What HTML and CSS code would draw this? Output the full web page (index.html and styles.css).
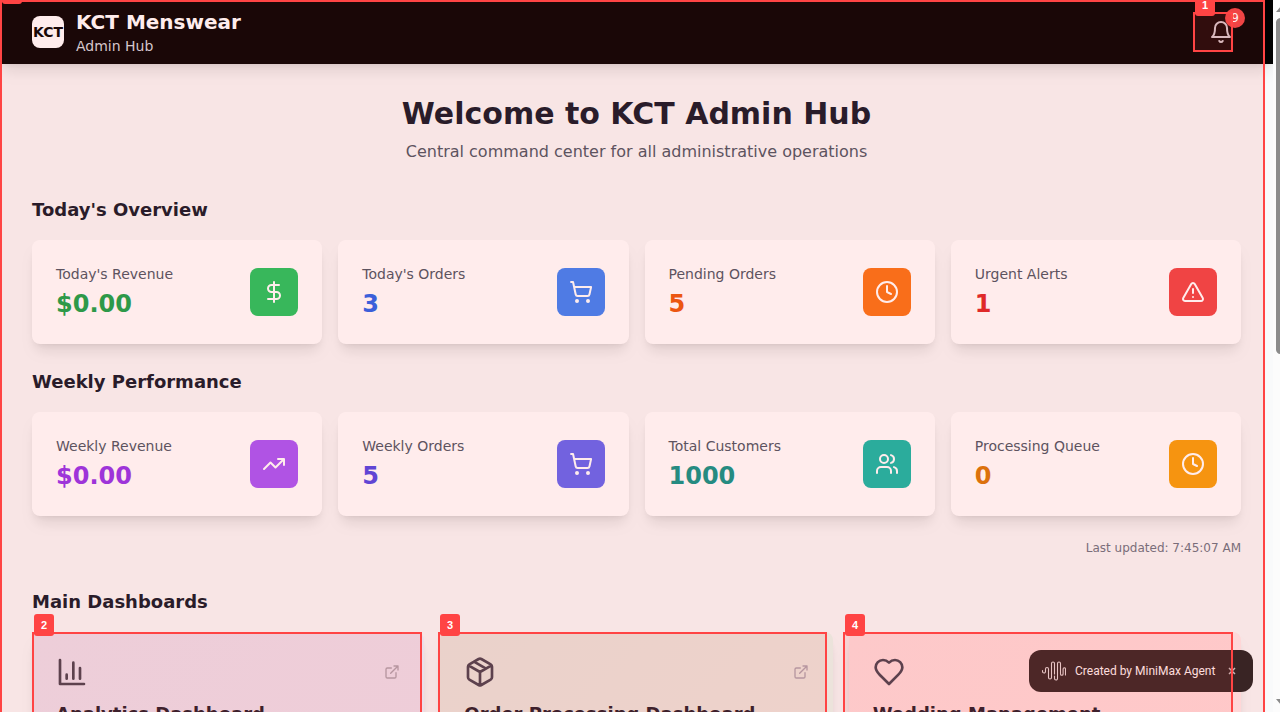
FILE: index.html
```html
<!DOCTYPE html>
<html lang="en">
<head>
<meta charset="utf-8">
<title>KCT Admin Hub</title>
<link rel="stylesheet" href="styles.css">
</head>
<body>
<svg class="defs" aria-hidden="true">
  <symbol id="cart" viewBox="0 0 24 24"><circle cx="8" cy="21" r="1"/><circle cx="19" cy="21" r="1"/><path d="M2.05 2.05h2l2.66 12.42a2 2 0 0 0 2 1.58h9.78a2 2 0 0 0 1.95-1.57l1.65-7.43H5.12"/></symbol>
  <symbol id="clock" viewBox="0 0 24 24"><circle cx="12" cy="12" r="10"/><path d="M12 6v6l4 2"/></symbol>
  <symbol id="external" viewBox="0 0 24 24"><path d="M15 3h6v6M10 14 21 3M18 13v6a2 2 0 0 1-2 2H5a2 2 0 0 1-2-2V8a2 2 0 0 1 2-2h6"/></symbol>
</svg>
<div class="window">
  <div class="page">
    <header class="header">
      <div class="logo">KCT</div>
      <div class="brand">
        <div class="brand-name">KCT Menswear</div>
        <div class="brand-sub">Admin Hub</div>
      </div>
      <div class="bell">
        <svg class="icon" viewBox="0 0 24 24"><path d="M6 8a6 6 0 0 1 12 0c0 7 3 9 3 9H3s3-2 3-9"/><path d="M10.3 21a1.94 1.94 0 0 0 3.4 0"/></svg>
        <span class="bell-count">9</span>
      </div>
    </header>
    <main class="main">
      <div class="intro">
        <h1 class="title">Welcome to KCT Admin Hub</h1>
        <p class="subtitle">Central command center for all administrative operations</p>
      </div>
      <section class="section">
        <h2 class="heading">Today's Overview</h2>
        <div class="stats">
          <div class="stat"><div><p class="label">Today's Revenue</p><p class="value green">$0.00</p></div><div class="tile bg-green"><svg class="icon" viewBox="0 0 24 24"><path d="M12 2v20M17 5H9.5a3.5 3.5 0 0 0 0 7h5a3.5 3.5 0 0 1 0 7H6"/></svg></div></div>
          <div class="stat"><div><p class="label">Today's Orders</p><p class="value blue">3</p></div><div class="tile bg-blue"><svg class="icon"><use href="#cart"/></svg></div></div>
          <div class="stat"><div><p class="label">Pending Orders</p><p class="value orange">5</p></div><div class="tile bg-orange"><svg class="icon"><use href="#clock"/></svg></div></div>
          <div class="stat"><div><p class="label">Urgent Alerts</p><p class="value red">1</p></div><div class="tile bg-red"><svg class="icon" viewBox="0 0 24 24"><path d="m21.73 18-8-14a2 2 0 0 0-3.48 0l-8 14A2 2 0 0 0 4 21h16a2 2 0 0 0 1.73-3M12 9v4M12 17h.01"/></svg></div></div>
        </div>
      </section>
      <section class="section">
        <h2 class="heading">Weekly Performance</h2>
        <div class="stats">
          <div class="stat"><div><p class="label">Weekly Revenue</p><p class="value purple">$0.00</p></div><div class="tile bg-purple"><svg class="icon" viewBox="0 0 24 24"><path d="m22 7-8.500 8.500-5-5L2 17M16 7h6v6"/></svg></div></div>
          <div class="stat"><div><p class="label">Weekly Orders</p><p class="value indigo">5</p></div><div class="tile bg-indigo"><svg class="icon"><use href="#cart"/></svg></div></div>
          <div class="stat"><div><p class="label">Total Customers</p><p class="value teal">1000</p></div><div class="tile bg-teal"><svg class="icon" viewBox="0 0 24 24"><path d="M16 21v-2a4 4 0 0 0-4-4H6a4 4 0 0 0-4 4v2"/><circle cx="9" cy="7" r="4"/><path d="M22 21v-2a4 4 0 0 0-3-3.870M16 3.130a4 4 0 0 1 0 7.750"/></svg></div></div>
          <div class="stat"><div><p class="label">Processing Queue</p><p class="value amber">0</p></div><div class="tile bg-amber"><svg class="icon"><use href="#clock"/></svg></div></div>
        </div>
      </section>
      <p class="updated">Last updated: 7:45:07 AM</p>
      <section>
        <h2 class="heading">Main Dashboards</h2>
        <div class="boards">
          <div class="board board-analytics">
            <div class="board-top"><svg class="icon icon-lg" viewBox="0 0 24 24"><path d="M3 3v18h18M18 17V9M13 17V5M8 17v-3"/></svg><svg class="icon icon-sm"><use href="#external"/></svg></div>
            <h3 class="board-title">Analytics Dashboard</h3>
          </div>
          <div class="board board-orders">
            <div class="board-top"><svg class="icon icon-lg" viewBox="0 0 24 24"><path d="m7.500 4.270 9 5.150M21 8a2 2 0 0 0-1-1.730l-7-4a2 2 0 0 0-2 0l-7 4A2 2 0 0 0 3 8v8a2 2 0 0 0 1 1.730l7 4a2 2 0 0 0 2 0l7-4A2 2 0 0 0 21 16ZM3.300 7l8.700 5 8.700-5M12 22V12"/></svg><svg class="icon icon-sm"><use href="#external"/></svg></div>
            <h3 class="board-title">Order Processing Dashboard</h3>
          </div>
          <div class="board board-wedding">
            <div class="board-top"><svg class="icon icon-lg" viewBox="0 0 24 24"><path d="M19 14c1.490-1.460 3-3.210 3-5.500A5.500 5.500 0 0 0 16.500 3c-1.760 0-3 .5-4.500 2-1.500-1.500-2.740-2-4.500-2A5.500 5.500 0 0 0 2 8.500c0 2.300 1.500 4.050 3 5.500l7 7Z"/></svg><svg class="icon icon-sm"><use href="#external"/></svg></div>
            <h3 class="board-title">Wedding Management</h3>
          </div>
        </div>
      </section>
    </main>
  </div>
  <div class="scrollbar">
    <svg class="arrow" viewBox="0 0 10 6"><path d="M0 6 5 0l5 6z"/></svg>
    <div class="thumb"></div>
    <svg class="arrow arrow-down" viewBox="0 0 10 6"><path d="M0 0h10L5 6z"/></svg>
  </div>

  <div class="toast">
    <svg class="wave" viewBox="0 0 24 20"><path d="M.5 9.500v1a1.500 1.500 0 0 0 3 0V8a1.500 1.500 0 0 1 3 0v8.500a1.500 1.500 0 0 0 3 0V2.500a1.500 1.500 0 0 1 3 0V13M12.500 15v2.500a1.500 1.500 0 0 0 3 0V2.500a1.500 1.500 0 0 1 3 0V13a1.300 1.300 0 0 0 2.600 0V8a1.200 1.200 0 0 1 2.400 0v6"/></svg>
    <span>Created by MiniMax Agent</span>
    <svg class="close" viewBox="0 0 8 8"><path d="m1 1 6 6M7 1 1 7"/></svg>
  </div>

  <div class="mark mark-0"><span class="tag">0</span></div>
  <div class="mark mark-1"><span class="tag">1</span></div>
  <div class="mark mark-2"><span class="tag">2</span></div>
  <div class="mark mark-3"><span class="tag">3</span></div>
  <div class="mark mark-4"><span class="tag">4</span></div>
</div>
</body>
</html>
```
FILE: styles.css
```css
* { box-sizing: border-box; }
body, h1, h2, h3, p { margin: 0; }
body { background: #fff; overflow: hidden; font-family: "DejaVu Sans", sans-serif; color: #111827; }
.defs { position: absolute; width: 0; height: 0; }

.window { position: relative; display: flex; width: 1280px; height: 712px; overflow: hidden; }
.page { flex: 0 0 1273px; background: linear-gradient(90deg, #f8f8f8 1264px, #f9fafb 1266px); }

.icon { display: block; width: 24px; height: 24px; fill: none; stroke: currentColor; stroke-width: 2; stroke-linecap: round; stroke-linejoin: round; }
.icon-lg { width: 32px; height: 32px; color: #374151; }
.icon-sm { width: 16px; height: 16px; color: #a6aab6; }

.header { display: flex; align-items: center; gap: 12px; height: 64px; padding: 0 32px; background: #000; color: #fff; box-shadow: 0 10px 15px -3px rgba(0,0,0,.1), 0 4px 6px -4px rgba(0,0,0,.1); }
.logo { display: flex; align-items: center; justify-content: center; width: 32px; height: 32px; border-radius: 8px; background: #fff; color: #000; font-size: 14px; font-weight: 700; }
.brand-name { font-size: 20px; line-height: 28px; font-weight: 700; }
.brand-sub { font-size: 14px; line-height: 20px; color: #d1d5db; }
.bell { position: relative; margin-left: auto; padding: 8px; color: #d1d5db; }
.bell-count { position: absolute; top: -4px; right: -4px; width: 20px; height: 20px; border-radius: 50%; background: #ef4444; color: #fff; font-size: 12px; line-height: 20px; text-align: center; }

.main { padding: 32px; }
.intro { text-align: center; margin-bottom: 32px; }
.title { font-size: 30px; line-height: 36px; font-weight: 700; margin-bottom: 8px; }
.subtitle { font-size: 16px; line-height: 24px; color: #4b5563; }
.section { margin-bottom: 24px; }
.heading { font-size: 18px; line-height: 28px; font-weight: 600; margin-bottom: 16px; }
.stats { display: grid; grid-template-columns: repeat(4, 1fr); gap: 16px; }
.stat { display: flex; align-items: center; justify-content: space-between; padding: 24px; border-radius: 8px; background: #fff; box-shadow: 0 10px 15px -3px rgba(0,0,0,.1), 0 4px 6px -4px rgba(0,0,0,.1); }
.label { font-size: 14px; line-height: 20px; color: #4b5563; margin-bottom: 4px; }
.value { font-size: 24px; line-height: 32px; font-weight: 700; }
.tile { padding: 12px; border-radius: 8px; color: #fff; }
.green { color: #16a34a; }
.blue { color: #2563eb; }
.orange { color: #ea580c; }
.red { color: #dc2626; }
.purple { color: #9333ea; }
.indigo { color: #4f46e5; }
.teal { color: #0d9488; }
.amber { color: #d97706; }
.bg-green { background: #22c55e; }
.bg-blue { background: #3b82f6; }
.bg-orange { background: #f97316; }
.bg-red { background: #ef4444; }
.bg-purple { background: #a855f7; }
.bg-indigo { background: #6366f1; }
.bg-teal { background: #14b8a6; }
.bg-amber { background: #f59e0b; }
.updated { margin-bottom: 32px; font-size: 12px; line-height: 16px; text-align: right; color: #6b7280; }

.boards { display: grid; grid-template-columns: repeat(3, 1fr); gap: 16px; }
.board { height: 180px; padding: 24px; border-radius: 8px; box-shadow: 0 10px 15px -3px rgba(0,0,0,.1), 0 4px 6px -4px rgba(0,0,0,.1); }
.board-analytics { background: linear-gradient(135deg, #e9f0fd, #ebeffc); }
.board-orders { background: linear-gradient(135deg, #e6f5ec, #ebf5ec); }
.board-wedding { background: linear-gradient(135deg, #fde9eb, #ffe8e8); }
.board-top { display: flex; align-items: center; justify-content: space-between; margin-bottom: 12px; }
.board-title { font-size: 18px; line-height: 28px; font-weight: 600; }

.scrollbar { flex: 0 0 15px; display: flex; flex-direction: column; align-items: center; background: #fcfcfc; }
.arrow { flex: none; width: 10px; height: 6px; margin: 6px 0; fill: #8b8b8b; }
.arrow-down { margin: auto 0 7px; }
.thumb { width: 9px; height: 336px; border-radius: 5px; background: #8b8b8b; }

.toast { position: absolute; left: 1029px; top: 650px; display: flex; align-items: center; width: 224px; height: 42px; padding: 0 14px 0 13px; border-radius: 12px; background: #232121; color: #fff; font: 12px/16px Roboto, sans-serif; }
.wave { width: 24px; height: 20px; margin-right: 9px; fill: none; stroke: #e4e4e4; stroke-width: 1.1; stroke-linecap: round; }
.close { width: 8px; height: 8px; margin-left: auto; margin-right: 3px; fill: none; stroke: #c4c4c4; stroke-width: 1.5; }

.mark { position: absolute; border: 2px solid #f44; background: rgba(255,68,68,.1); }
.tag { position: absolute; left: 0; top: -20px; width: 20px; height: 22px; border-radius: 3px; background: #f44; color: #fff; font: bold 11px/22px "Liberation Sans", sans-serif; text-align: center; }
.mark-0 { left: 0; top: 0; width: 1265px; height: 760px; }
.mark-1 { left: 1193px; top: 12px; width: 40px; height: 40px; }
.mark-2 { left: 32px; top: 632px; width: 390px; height: 160px; }
.mark-3 { left: 438px; top: 632px; width: 389px; height: 160px; }
.mark-4 { left: 843px; top: 632px; width: 390px; height: 160px; }
```
